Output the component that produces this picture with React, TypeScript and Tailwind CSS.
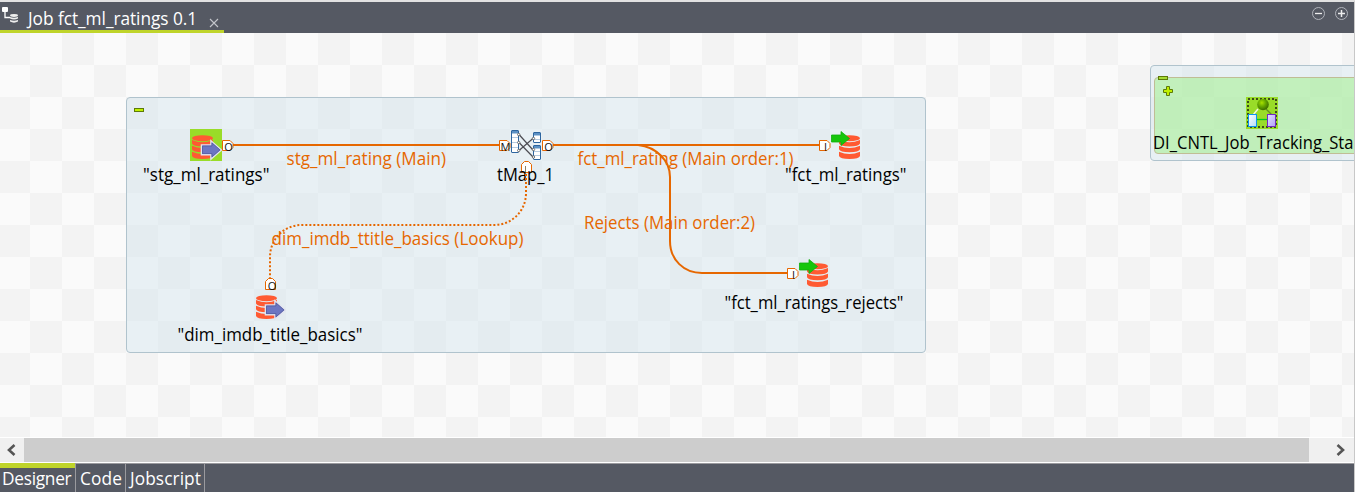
import type { ReactNode } from "react";

const ORANGE = "#e66700";

type LabelProps = { x: number; y: number; width: number; fill?: string; children: ReactNode };

function Label({ x, y, width, fill = "#000", children }: LabelProps) {
  return (
    <text x={x} y={y} textLength={width} lengthAdjust="spacingAndGlyphs" fill={fill} fontSize="17.3">
      {children}
    </text>
  );
}

function Database({ x, y }: { x: number; y: number }) {
  return (
    <g transform={`translate(${x} ${y})`} fill="#ff5a32">
      <ellipse cx="10.5" cy="3.2" rx="10.5" ry="3" />
      <path d="M0 5q10.5 4.600 21 0v3.500q-1 3-10.500 3T0 8.500z" />
      <path d="M0 10.700q10.500 4.600 21 0v3.500q-1 3-10.500 3T0 14.200z" />
      <path d="M0 16.700q10.500 4.600 21 0v4.300q-1 3-10.500 3T0 21z" />
    </g>
  );
}

function InputIcon({ x, y }: { x: number; y: number }) {
  return (
    <g>
      <Database x={x} y={y} />
      <path
        transform={`translate(${x + 10} ${y + 7})`}
        d="M0 3.500h9.500V0l9 7.900-9 7.900v-3.700H0z"
        fill="#6c76c2"
        stroke="#e3e3ee"
        strokeWidth="2.600"
        paintOrder="stroke"
      />
      <path
        transform={`translate(${x + 10} ${y + 7})`}
        d="M.5 4h9.500V1l8 6.900-8 6.900v-3.200H.5z"
        fill="none"
        stroke="#56609f"
        strokeWidth=".8"
      />
    </g>
  );
}

function OutputIcon({ x, y }: { x: number; y: number }) {
  return (
    <g>
      <Database x={x} y={y} />
      <path
        transform={`translate(${x - 8} ${y - 4})`}
        d="M.5 4H10V.5l8.500 7-8.500 7V11H.5z"
        fill="#16c60c"
        stroke="#0fad0d"
        strokeWidth=".8"
      />
    </g>
  );
}

function SidePort({ x, y, letter }: { x: number; y: number; letter: string }) {
  return (
    <g>
      <path d={`M${x + 0.5} ${y + 0.5}h7.500l3 3v4l-3 3H${x + 0.5}z`} fill="#fff" stroke={ORANGE} />
      <text x={x + 6.5} y={y + 11} fontSize="11" textAnchor="middle" fill="#111">
        {letter}
      </text>
    </g>
  );
}

function TopPort({ x, y, letter }: { x: number; y: number; letter?: string }) {
  return (
    <g>
      <path d={`M${x + 0.5} ${y + 11.5}v-8l3-3h4l3 3v8z`} fill="#fff" stroke={ORANGE} />
      {letter ? (
        <text x={x + 7} y={y + 12} fontSize="11" textAnchor="middle" fill="#111">
          {letter}
        </text>
      ) : (
        <path d={`M${x + 4.5} ${y + 5}v6`} stroke="#8c8068" />
      )}
    </g>
  );
}

function MapIcon() {
  return (
    <g>
      <g fill="#fff" stroke="#2d659f">
        <rect x="511.500" y="130.500" width="7" height="22" rx=".5" />
        <rect x="533.500" y="132.500" width="7" height="10" rx=".5" />
        <rect x="533.500" y="145.500" width="7" height="14" rx=".5" />
      </g>
      <g fill="#5c91c4">
        <rect x="512" y="131" width="6" height="2.500" />
        <rect x="534" y="133" width="6" height="2.500" />
        <rect x="534" y="146" width="6" height="2.500" />
      </g>
      <path d="M512 137.500h6M512 142.500h6M512 147.500h6M534 139.500h6M534 151.500h6M534 155.500h6" stroke="#b5cbe0" />
      <path d="M519 134.500l14 15.500M519 142.500l14 14.500M519 150.500L533.500 138" stroke="#4c4c52" strokeWidth="1.200" />
      <g fill="#fff" stroke="#555" strokeWidth=".8">
        <circle cx="518.700" cy="134.500" r="1.200" />
        <circle cx="518.700" cy="142.500" r="1.200" />
        <circle cx="518.700" cy="150.500" r="1.200" />
        <circle cx="533.500" cy="138.500" r="1.200" />
        <circle cx="533.500" cy="149.500" r="1.200" />
        <circle cx="533.500" cy="157" r="1.200" />
      </g>
    </g>
  );
}

function JobletIcon() {
  return (
    <g>
      <defs>
        <radialGradient id="ball" cx="40%" cy="35%" r="65%">
          <stop offset="0" stopColor="#a8e000" />
          <stop offset=".5" stopColor="#66a800" />
          <stop offset="1" stopColor="#3c6c00" />
        </radialGradient>
        <linearGradient id="blueBox" x1="0" y1="0" x2="1" y2="1">
          <stop offset="0" stopColor="#fff" />
          <stop offset="1" stopColor="#b4dcfa" />
        </linearGradient>
        <linearGradient id="violetBox" x1="0" y1="0" x2="1" y2="1">
          <stop offset="0" stopColor="#e4e0fc" />
          <stop offset="1" stopColor="#b0a0f8" />
        </linearGradient>
      </defs>
      <rect x="1246" y="97" width="32" height="32" fill="#99dc28" />
      <rect x="1248" y="99" width="28" height="28" fill="none" stroke="#3d4a1a" strokeWidth="2" strokeDasharray="2 2" />
      <path d="M1258 109l-5 6" stroke="#f2f8df" strokeWidth="1.500" />
      <path d="M1266 109l6 6" stroke="#638f20" strokeWidth="1.300" />
      <path d="M1257 119.500h11" stroke="#00cb1c" strokeWidth="1.300" />
      <circle cx="1263" cy="104.500" r="5.800" fill="url(#ball)" />
      <rect x="1248.500" y="114.500" width="8" height="12" fill="url(#blueBox)" stroke="#0a95ee" />
      <rect x="1267.500" y="114.500" width="8" height="12" fill="url(#violetBox)" stroke="#7228c0" />
    </g>
  );
}

function Diagram() {
  return (
    <svg className="absolute inset-0" width="1354" height="404" viewBox="0 33 1354 404">
      <g fill="#c0f000" stroke="#5d7a08">
        <rect x="134.500" y="108.500" width="9" height="3" />
        <rect x="1158.500" y="76.500" width="9" height="3" fill="#a6dc34" />
        <path d="M1166.500 86.500h3v3h3v3h-3v3h-3v-3h-3v-3h3z" />
      </g>

      <rect x="190" y="129" width="32" height="32" fill="#99dc28" />
      <InputIcon x={192} y={135} />
      <InputIcon x={256} y={295} />
      <OutputIcon x={839} y={135} />
      <OutputIcon x={807} y={263} />
      <MapIcon />
      <JobletIcon />

      <SidePort x={222} y={140} letter="O" />
      <SidePort x={499} y={140} letter="M" />
      <SidePort x={542} y={140} letter="O" />
      <SidePort x={819} y={140} letter="I" />
      <SidePort x={787} y={268} letter="I" />
      <TopPort x={265} y={278} letter="O" />
      <TopPort x={521} y={161} />

      <Label x={143} y={181} width={126.5}>"stg_ml_ratings"</Label>
      <Label x={497} y={181} width={57}>tMap_1</Label>
      <Label x={785} y={181} width={121.5}>"fct_ml_ratings"</Label>
      <Label x={724.5} y={309} width={179}>"fct_ml_ratings_rejects"</Label>
      <Label x={177.500} y={341} width={185}>"dim_imdb_title_basics"</Label>
      <Label x={1153} y={149} width={200.5}>DI_CNTL_Job_Tracking_Sta</Label>
      <Label x={286.5} y={165} width={159.500} fill={ORANGE}>stg_ml_rating (Main)</Label>
      <Label x={577.5} y={165} width={216} fill={ORANGE}>fct_ml_rating (Main order:1)</Label>
      <Label x={584} y={229} width={171} fill={ORANGE}>Rejects (Main order:2)</Label>
      <Label x={271.5} y={245} width={252} fill={ORANGE}>dim_imdb_ttitle_basics (Lookup)</Label>

      <g fill="none" stroke={ORANGE} strokeWidth="2">
        <path d="M233 145H500M553 145H819" />
        <path d="M638 145C657 147 670 161 670 177V241C670 260 684 273 702 273H787" />
        <path d="M526 174V193C526 211 512 225 494 225H302C284 225 270 239 270 257V278" strokeDasharray="2 2" />
      </g>
    </svg>
  );
}

function Header() {
  return (
    <header className="flex h-[31px] justify-between bg-[#555963]">
      <div className="flex h-full w-[224px] items-center border-b-[3px] border-[#bfd42a] pl-[1px] text-white">
        <svg width="18" height="18" viewBox="0 0 18 18" fill="none" className="mr-[9px]">
          <rect x="1" y="0" width="6" height="5" rx="1" fill="#fff" />
          <path d="M4 5v5.500h5" stroke="#fff" strokeWidth="1.300" />
          <g fill="#eee">
            <ellipse cx="13" cy="8.500" rx="4" ry="1.400" />
            <path d="M9 10q4 1.500 8 0v1.500q-4 1.800-8 0zM9 13q4 1.500 8 0v1.600q-4 2.200-8 0z" />
          </g>
        </svg>
        <span className="w-[170px] pt-[6px] text-[17.3px] leading-6 tracking-[-0.04px] whitespace-nowrap">
          Job fct_ml_ratings 0.1
        </span>
        <svg width="10" height="10" viewBox="0 0 10 10" className="mt-[13px] ml-[11px]" stroke="#c4c6cb" strokeWidth="1.100">
          <path d="M1 1l8 8M9 1L1 9" />
        </svg>
      </div>
      <div className="flex gap-[9px] pt-[5px] pr-[6px]">
        <svg width="14" height="14" viewBox="0 0 14 14" fill="none">
          <circle cx="7.5" cy="6.500" r="6" stroke="#b0b3ba" />
          <path d="M4 6.500h7" stroke="#eee" strokeWidth="1.300" />
        </svg>
        <svg width="14" height="14" viewBox="0 0 14 14" fill="none">
          <circle cx="7.5" cy="6.500" r="6" stroke="#b0b3ba" />
          <path d="M4 6.500h7M7.5 3v7" stroke="#eee" strokeWidth="1.500" />
        </svg>
      </div>
    </header>
  );
}

function ScrollBar() {
  return (
    <div className="flex h-[26px] border-t border-b border-t-white border-b-white bg-[#f0f0f0]">
      <div className="flex w-6 items-center justify-center">
        <svg width="10" height="12" viewBox="0 0 10 12" fill="none" className="mr-[3px]">
          <path d="M8.500 1L3 6l5.500 5" stroke="#555" strokeWidth="2.600" />
        </svg>
      </div>
      <div className="w-[1285px] bg-[#cdcdcd]" />
      <div className="flex flex-1 items-center justify-end pr-[8px]">
        <svg width="10" height="12" viewBox="0 0 10 12" fill="none">
          <path d="M1.500 1L7 6l-5.500 5" stroke="#555" strokeWidth="2.600" />
        </svg>
      </div>
    </div>
  );
}

function BottomTabs() {
  return (
    <nav className="flex h-[29px] border-t border-[#9a9a9e] bg-[#555963] text-[17.3px] leading-[30px] whitespace-nowrap text-white">
      <div className="-mt-px w-[75px] border-t-[5px] border-[#bfd42a] pl-[2px] leading-[21px] tracking-[-0.28px]">Designer</div>
      <div className="w-[51px] border-r border-l border-[#9a9a9e] pl-[4px] tracking-[0.1px]">Code</div>
      <div className="w-[79px] border-r border-[#9a9a9e] pl-[4px] tracking-[0.08px]">Jobscript</div>
    </nav>
  );
}

export default function App() {
  return (
    <div className="flex h-[492px] w-[1355px] flex-col overflow-hidden border-t-2 border-r border-t-[#e2e2e2] border-r-[#c8c8c8] font-['Open_Sans','Noto_Sans',sans-serif]">
      <Header />
      <main className="relative h-[404px] overflow-hidden bg-[repeating-conic-gradient(#fafafa_0_25%,#f3f3f3_0_50%)] bg-[length:64px_64px] bg-[position:-2px_0]">
        <div className="absolute top-[64px] left-[126px] h-[256px] w-[800px] rounded-[4px] border border-[#b0c3cd] bg-[#d6e6ee]/50" />
        <div className="absolute top-[32px] left-[1150px] h-[96px] w-[240px] rounded-[4px] border border-[#b0c3cd] bg-[#d6e6ee]/50">
          <div className="mt-[11px] ml-[3px] h-[77px] rounded-[4px] border border-[#c0bd95] bg-[#9bf084]/50" />
        </div>
        <Diagram />
      </main>
      <ScrollBar />
      <BottomTabs />
    </div>
  );
}
